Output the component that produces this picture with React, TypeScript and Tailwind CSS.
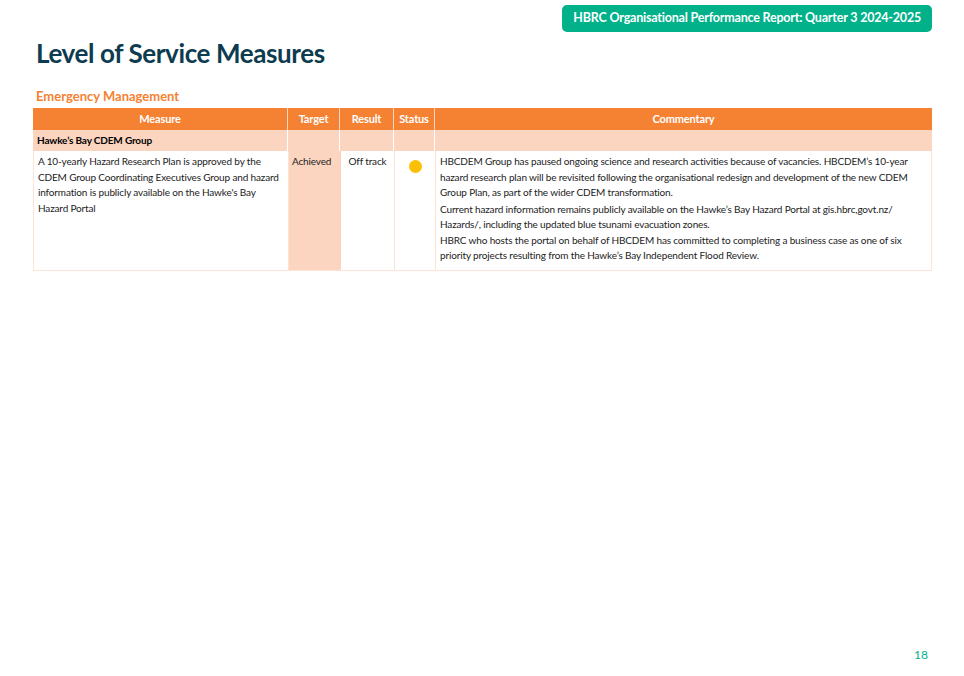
export default function App() {
  const font = { fontFamily: "Lato, 'Open Sans', sans-serif" };
  return (
    <div className="relative w-[964px] h-[676px] bg-white overflow-hidden" style={font}>
      <div className="flex justify-end pt-[5px] pr-[32px]">
        <div className="w-[370px] h-[27px] rounded-[5px] bg-[#00b18a] text-white font-bold text-[12.5px] flex items-center justify-end pr-[11px] tracking-[-0.2px]">
          HBRC Organisational Performance Report: Quarter 3 2024-2025
        </div>
      </div>
      <div className="pl-[36px] pt-[4px]">
        <h1 className="text-[26px] font-bold text-[#0d3b4f] leading-[34px] tracking-[-0.4px]">Level of Service Measures</h1>
        <h2 className="mt-[18px] text-[13px] font-bold text-[#f58233] leading-[16px]">Emergency Management</h2>
      </div>
      <div className="ml-[33px] mt-[4px] w-[899px] text-[10px] leading-[15.5px] text-[#222] tracking-[-0.15px]">
        <div className="grid grid-cols-[255px_52px_54px_41px_497px] bg-[#f58233] text-white font-bold text-[11px] h-[22px] items-stretch">
          <div className="flex items-center justify-center border-r border-[#fbd5c0]">Measure</div>
          <div className="flex items-center justify-center border-r border-[#fbd5c0]">Target</div>
          <div className="flex items-center justify-center border-r border-[#fbd5c0]">Result</div>
          <div className="flex items-center justify-center border-r border-[#fbd5c0]">Status</div>
          <div className="flex items-center justify-center">Commentary</div>
        </div>
        <div className="grid grid-cols-[255px_52px_54px_41px_497px] bg-[#fcd5c0] h-[21px]">
          <div className="flex items-center pl-[4px] font-bold text-black border-r border-white">Hawke’s Bay CDEM Group</div>
          <div className="border-r border-white" />
          <div className="border-r border-white" />
          <div className="border-r border-white" />
          <div />
        </div>
        <div className="grid grid-cols-[255px_52px_54px_41px_497px] h-[120px] border border-t-0 border-[#fde3d6]">
          <div className="pl-[4px] pt-[3px] border-r border-[#fde3d6]">
            A 10-yearly Hazard Research Plan is approved by the<br />
            CDEM Group Coordinating Executives Group and hazard<br />
            information is publicly available on the Hawke's Bay<br />
            Hazard Portal
          </div>
          <div className="bg-[#fcd5c0] pl-[3px] pt-[3px]">Achieved</div>
          <div className="text-center pt-[3px] border-r border-[#fde3d6]">Off track</div>
          <div className="flex justify-center pt-[9px] border-r border-[#fde3d6]">
            <div className="w-[13px] h-[13px] rounded-full bg-[#fbbf06]" />
          </div>
          <div className="pl-[4px] pt-[3px]">
            <p>HBCDEM Group has paused ongoing science and research activities because of vacancies. HBCDEM’s 10-year<br />hazard research plan will be revisited following the organisational redesign and development of the new CDEM<br />Group Plan, as part of the wider CDEM transformation.</p>
            <p className="mt-[1px]">Current hazard information remains publicly available on the Hawke’s Bay Hazard Portal at gis.hbrc,govt.nz/<br />Hazards/, including the updated blue tsunami evacuation zones.</p>
            <p>HBRC who hosts the portal on behalf of HBCDEM has committed to completing a business case as one of six<br />priority projects resulting from the Hawke’s Bay Independent Flood Review.</p>
          </div>
        </div>
      </div>
      <div className="absolute right-[36px] top-[646px] text-[12px] text-[#00b18a]">18</div>
    </div>
  );
}
